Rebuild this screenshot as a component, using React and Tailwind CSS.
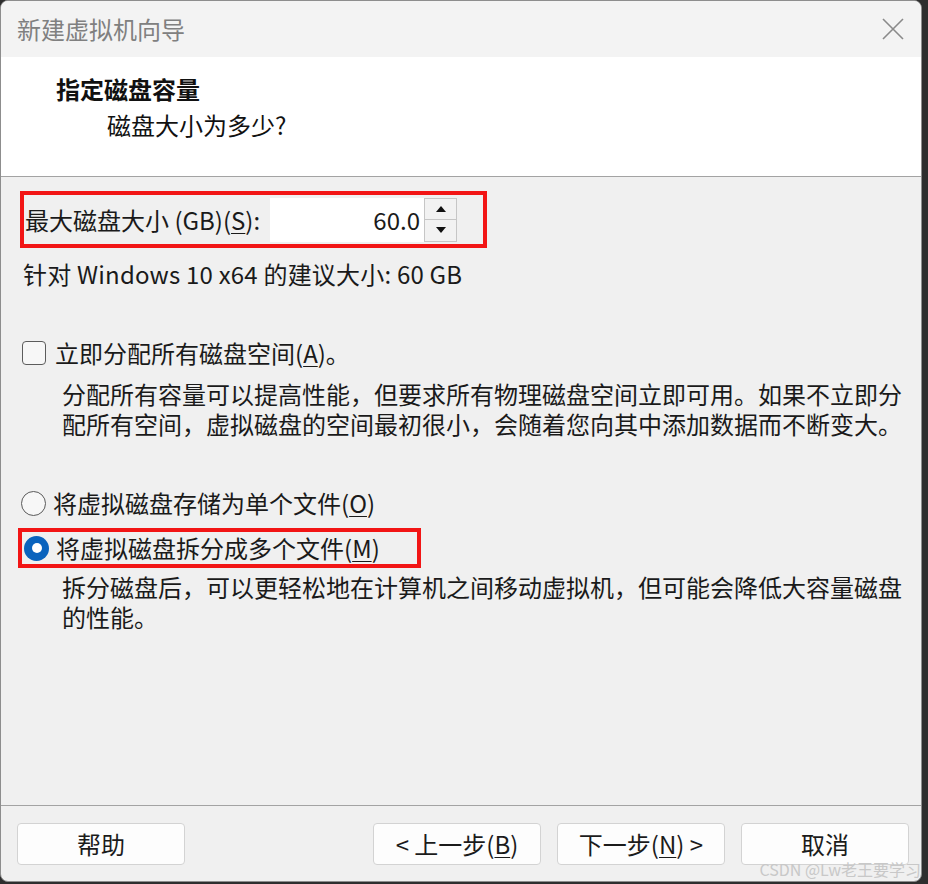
import React from "react";

const F = { fontFamily: '"Noto Sans CJK SC", "Microsoft YaHei", sans-serif' };

function U({ children }) {
  return <span className="underline underline-offset-[3px] decoration-1">{children}</span>;
}

function Btn({ children, className = "" }) {
  return (
    <div
      className={
        "w-[168px] h-[42px] rounded-[4px] border border-[#d3d3d3] bg-[#fdfdfd] flex items-center justify-center text-[24px] leading-none text-[#1b1b1b] " +
        className
      }
    >
      {children}
    </div>
  );
}

export default function App() {
  return (
    <div className="w-[928px] h-[884px] bg-[#2e2e2e] overflow-hidden" style={F}>
      <div className="w-[922px] h-[882px] rounded-[8px] border border-[#8d8d8d] overflow-hidden flex flex-col bg-[#f0f0f0] relative">
        {/* title bar */}
        <div className="h-[56px] bg-[#f3f3f3] flex items-center justify-between pl-[16px] pr-[16px] shrink-0">
          <span className="text-[24px] leading-none text-[#808080]">新建虚拟机向导</span>
          <svg width="24" height="24" viewBox="0 0 24 24" className="text-[#8a8a8a]">
            <path d="M2 2 L22 22 M22 2 L2 22" stroke="currentColor" strokeWidth="1.6" fill="none" />
          </svg>
        </div>
        {/* header */}
        <div className="h-[120px] bg-white border-b border-[#a3a3a3] shrink-0 pl-[55px] pt-[17px]">
          <div className="text-[24px] leading-[30px] font-bold text-[#111]">指定磁盘容量</div>
          <div className="text-[24px] leading-[30px] text-[#111] pl-[51px] mt-[6px]">磁盘大小为多少?</div>
        </div>
        {/* body */}
        <div className="flex-1 flex flex-col text-[24px] text-[#1a1a1a]">
          <div className="ml-[19px] mt-[14px] w-[467px] h-[57px] border-[4px] border-[#f21515] flex items-center pl-[1px]">
            <span className="w-[245px] leading-[30px] whitespace-nowrap">
              最大磁盘大小 (GB)(<U>S</U>):
            </span>
            <div className="w-[154px] h-[44px] bg-white flex items-center justify-end pr-[4px] leading-none">60.0</div>
            <div className="w-[33px] h-[44px] flex flex-col">
              <div className="h-[22px] border border-[#c6c6c6] bg-[#f2f2f2] flex items-center justify-center">
                <svg width="10" height="6" viewBox="0 0 10 6"><path d="M0 6 L5 0 L10 6 Z" fill="#111" /></svg>
              </div>
              <div className="h-[22px] border border-t-0 border-[#c6c6c6] bg-[#f2f2f2] flex items-center justify-center">
                <svg width="10" height="6" viewBox="0 0 10 6"><path d="M0 0 L5 6 L10 0 Z" fill="#111" /></svg>
              </div>
            </div>
          </div>
          <div className="ml-[22px] mt-[11px] leading-[30px] tracking-[0.2px]">针对 Windows 10 x64 的建议大小: 60 GB</div>

          <div className="ml-[21px] mt-[49px] h-[30px] flex items-center">
            <div className="w-[24px] h-[24px] rounded-[4px] border border-[#5c5c5c] bg-[#f7f7f7]" />
            <span className="ml-[9px] leading-[30px]">
              立即分配所有磁盘空间(<U>A</U>)。
            </span>
          </div>
          <div className="ml-[61px] mt-[11px] leading-[30px]">
            <div>分配所有容量可以提高性能，但要求所有物理磁盘空间立即可用。如果不立即分</div>
            <div>配所有空间，虚拟磁盘的空间最初很小，会随着您向其中添加数据而不断变大。</div>
          </div>

          <div className="ml-[20px] mt-[49px] h-[30px] flex items-center">
            <div className="w-[25px] h-[25px] rounded-full border border-[#5a5a5a] bg-[#f7f7f7]" />
            <span className="ml-[7px] leading-[30px]">
              将虚拟磁盘存储为单个文件(<U>O</U>)
            </span>
          </div>
          <div className="ml-[17px] mt-[10px] w-[403px] h-[40px] border-[4px] border-[#f21515] flex items-center pl-[2px]">
            <div className="w-[25px] h-[25px] rounded-full bg-[#0a63bd] flex items-center justify-center">
              <div className="w-[10px] h-[10px] rounded-full bg-white" />
            </div>
            <span className="ml-[7px] leading-[30px]">
              将虚拟磁盘拆分成多个文件(<U>M</U>)
            </span>
          </div>
          <div className="ml-[61px] mt-[4px] leading-[30px]">
            <div>拆分磁盘后，可以更轻松地在计算机之间移动虚拟机，但可能会降低大容量磁盘</div>
            <div>的性能。</div>
          </div>
          <div className="flex-1" />
        </div>
        {/* footer */}
        <div className="h-[76px] border-t border-[#a3a3a3] shrink-0 flex items-start pt-[17px] pl-[16px] pr-[12px] justify-between">
          <Btn>帮助</Btn>
          <div className="flex gap-[16px]">
            <Btn>&lt; 上一步(<U>B</U>)</Btn>
            <Btn>下一步(<U>N</U>) &gt;</Btn>
            <Btn>取消</Btn>
          </div>
        </div>
        <div className="absolute right-[0px] bottom-[4px] text-[16px] leading-none text-[#c8c8c8] whitespace-nowrap">
          CSDN @Lw老王要学习
        </div>
      </div>
    </div>
  );
}
